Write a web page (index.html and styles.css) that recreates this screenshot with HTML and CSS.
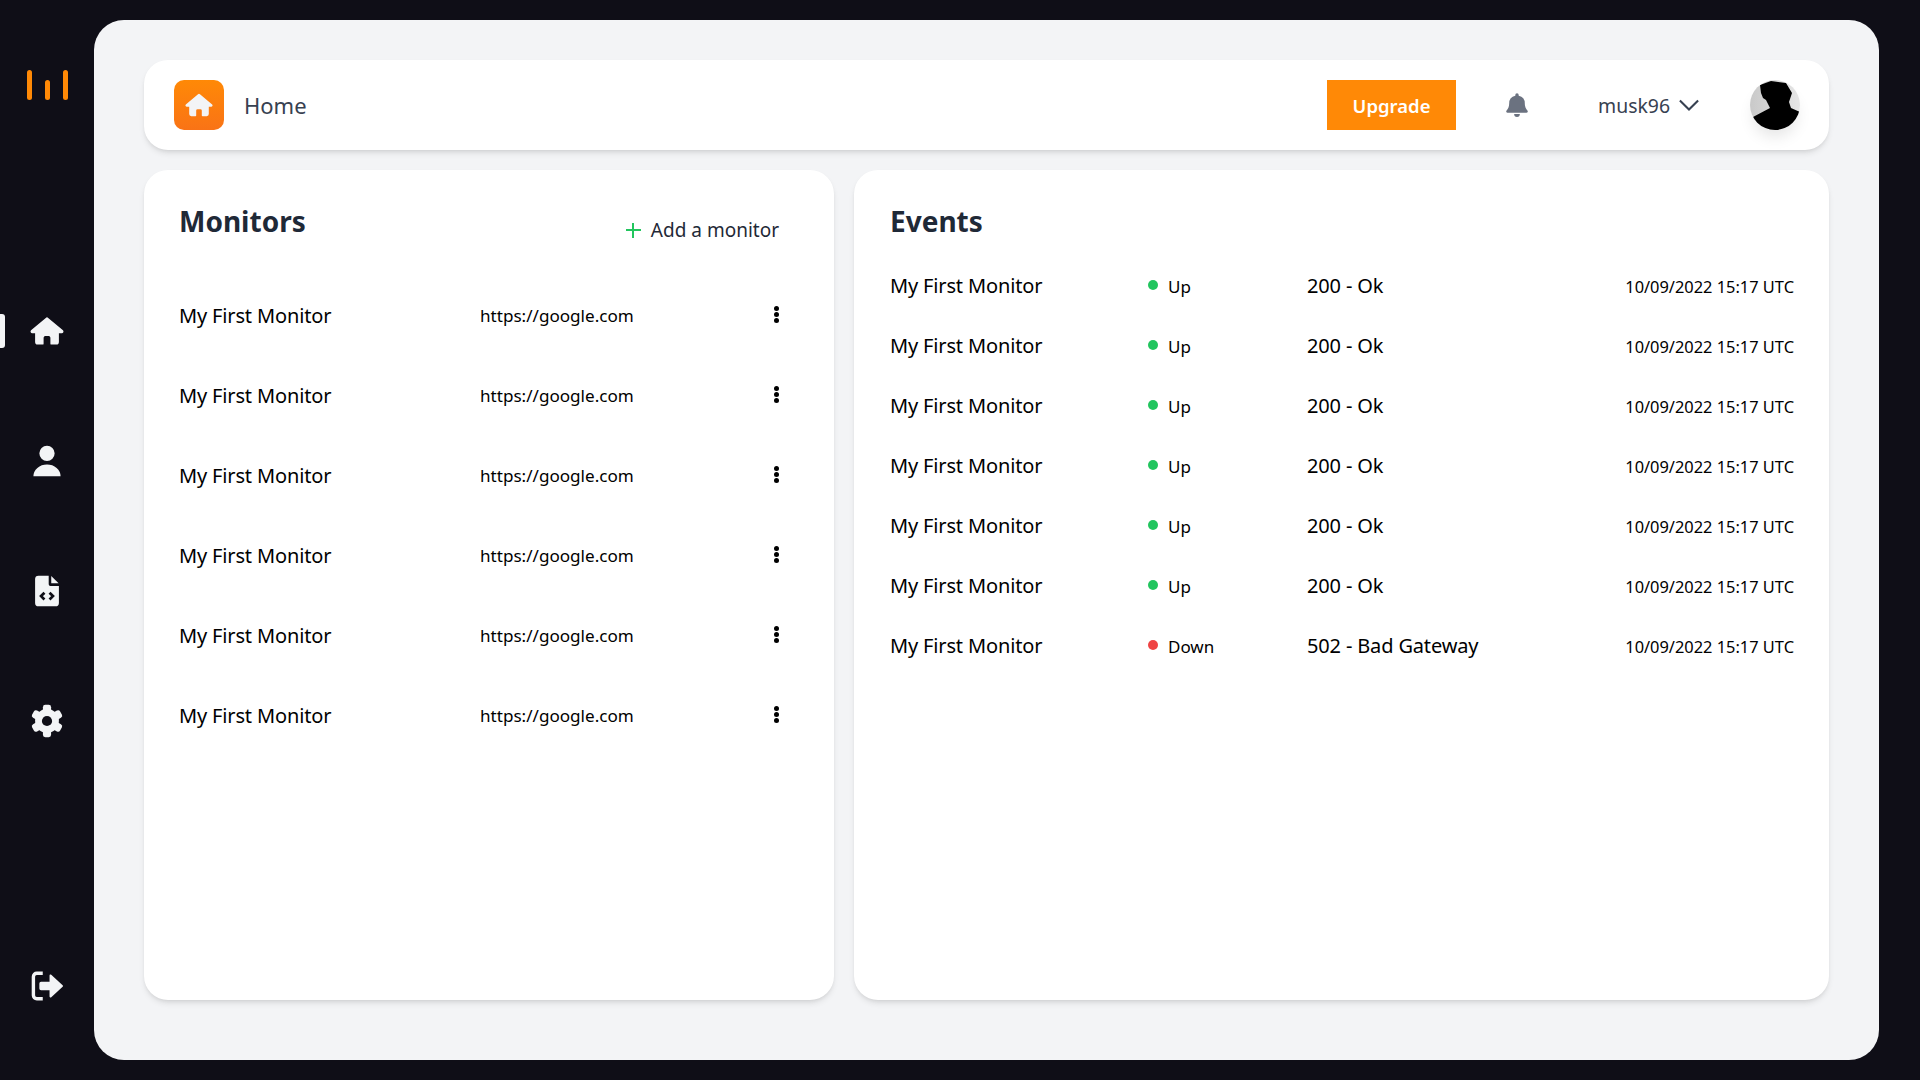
FILE: index.html
```html
<!DOCTYPE html>
<html lang="en">
<head>
    <meta charset="UTF-8">
    <title>Home</title>
    <link rel="stylesheet" href="styles.css">
</head>
<body>
<aside class="sidebar">
    <div class="logo"><span></span><span class="short"></span><span></span></div>
    <nav class="side-nav">
        <a class="side-link active" href="#">
            <svg class="side-icon" viewBox="0 0 20 20"><path d="M10.7 2.3a1 1 0 0 0-1.400 0L.6 9.600a1 1 0 0 0 .8 1.700H3v5.200A1.500 1.500 0 0 0 4.500 18H7.500a.5.5 0 0 0 .5-.5V14a1 1 0 0 1 1-1h2a1 1 0 0 1 1 1v3.500a.5.5 0 0 0 .5.5h3A1.500 1.500 0 0 0 17 16.500V11.300h1.600a1 1 0 0 0 .8-1.700z"/></svg>
        </a>
        <a class="side-link" href="#">
            <svg class="side-icon" viewBox="0 0 20 20"><path d="M10 10a4.500 4.500 0 1 0 0-9 4.500 4.500 0 0 0 0 9zM2 19a8 7 0 0 1 16 0z"/></svg>
        </a>
        <a class="side-link" href="#">
            <svg class="side-icon" viewBox="0 0 20 20"><path d="M5 1h6v5a1 1 0 0 0 1 1h5v10a2 2 0 0 1-2 2H5a2 2 0 0 1-2-2V3a2 2 0 0 1 2-2z"/><path d="M12.500 1.200 16.800 5.500h-4.300z"/><path class="code-mark" d="M8.500 11 6.500 13l2 2M11.500 11l2 2-2 2"/></svg>
        </a>
        <a class="side-link" href="#">
            <svg class="side-icon" viewBox="0 0 20 20">
                <circle cx="10" cy="10" r="7"/>
                <rect x="7.600" y="0.500" width="4.800" height="19" rx="1.400"/>
                <rect x="7.600" y="0.500" width="4.800" height="19" rx="1.400" transform="rotate(60 10 10)"/>
                <rect x="7.600" y="0.500" width="4.800" height="19" rx="1.400" transform="rotate(120 10 10)"/>
                <circle class="gear-hole" cx="10" cy="10" r="3"/>
            </svg>
        </a>
    </nav>
    <a class="side-link logout" href="#">
        <svg class="side-icon" viewBox="0 0 20 20"><path class="logout-bracket" d="M7.500 2.500H4A2 2 0 0 0 2 4.500v11a2 2 0 0 0 2 2h3.500"/><path d="M6.500 7.500h5V3.800a.6.6 0 0 1 1-.4l6.700 6.100a.7.7 0 0 1 0 1l-6.700 6.100a.6.600 0 0 1-1-.4v-3.700h-5a1 1 0 0 1-1-1v-3a1 1 0 0 1 1-1z"/></svg>
    </a>
</aside>

<main class="content">
    <header class="topbar">
        <div class="page-badge">
            <svg viewBox="0 0 20 20"><path d="M10.700 2.300a1 1 0 0 0-1.400 0L.6 9.600a1 1 0 0 0 .8 1.700H3v5.200A1.500 1.500 0 0 0 4.500 18H7.500a.5.5 0 0 0 .5-.5V14a1 1 0 0 1 1-1h2a1 1 0 0 1 1 1v3.500a.5.5 0 0 0 .5.5h3A1.500 1.500 0 0 0 17 16.500V11.300h1.600a1 1 0 0 0 .8-1.700z"/></svg>
        </div>
        <span class="page-title">Home</span>
        <button class="upgrade">Upgrade</button>
        <svg class="bell" viewBox="0 0 20 20"><path d="M10 1a1.300 1.300 0 0 0-1.300 1.300v.5A6 6 0 0 0 4 8.700c0 3-1 4.500-2 5.600a1 1 0 0 0 .7 1.700h14.600a1 1 0 0 0 .7-1.700c-1-1.100-2-2.600-2-5.600a6 6 0 0 0-4.700-5.900v-.5A1.300 1.300 0 0 0 10 1zM7.800 17a2.200 2.200 0 0 0 4.400 0z"/></svg>
        <span class="username">musk96</span>
        <svg class="chevron" viewBox="0 0 20 20"><path d="M3 6.500l7 7 7-7"/></svg>
        <div class="avatar">
            <svg viewBox="0 0 50 50">
                <defs><linearGradient id="avatarBg" x1="0" y1="0" x2="1" y2="0"><stop offset="0" stop-color="#c9c9c9"/><stop offset="1" stop-color="#e6e6e6"/></linearGradient></defs>
                <rect width="50" height="50" fill="url(#avatarBg)"/>
                <path d="M10 5 21 1 36 3 42 13 39 22 41 28 50 32 50 50 0 50 3 37 20 28 16 20 13 18 11 13z"/>
            </svg>
        </div>
    </header>

    <div class="panels">
        <section class="panel monitors">
            <div class="panel-head">
                <h2>Monitors</h2>
                <a class="add-link" href="#"><span class="plus"></span>Add a monitor</a>
            </div>
            <ul class="monitor-list" id="monitorList"></ul>
        </section>
        <section class="panel events">
            <h2>Events</h2>
            <div class="event-list" id="eventList"></div>
        </section>
    </div>
</main>

<script>
    const monitorList = document.getElementById('monitorList');
    for (let i = 0; i < 6; i++) {
        const li = document.createElement('li');
        li.className = 'monitor-row';
        li.innerHTML = `
            <span class="name">My First Monitor</span>
            <span class="url">https://google.com</span>
            <span class="dots"><i></i><i></i><i></i></span>
        `;
        monitorList.appendChild(li);
    }

    const events = [
        ['up', 'Up', '200 - Ok'],
        ['up', 'Up', '200 - Ok'],
        ['up', 'Up', '200 - Ok'],
        ['up', 'Up', '200 - Ok'],
        ['up', 'Up', '200 - Ok'],
        ['up', 'Up', '200 - Ok'],
        ['down', 'Down', '502 - Bad Gateway']
    ];
    const eventList = document.getElementById('eventList');
    events.forEach(ev => {
        const row = document.createElement('div');
        row.className = 'event-row';
        row.innerHTML = `
            <span class="name">My First Monitor</span>
            <span class="status ${ev[0]}">${ev[1]}</span>
            <span class="name">${ev[2]}</span>
            <span class="time">10/09/2022 15:17 UTC</span>
        `;
        eventList.appendChild(row);
    });
</script>
</body>
</html>
```

FILE: styles.css
```css
* {
    box-sizing: border-box;
}

body {
    margin: 0;
    height: 1080px;
    display: flex;
    padding: 20px 41px 20px 0;
    overflow: hidden;
    background-color: #0f0e17;
    font-family: "Noto Sans", "Open Sans", sans-serif;
    color: #000;
}

a {
    text-decoration: none;
    color: inherit;
}

/* sidebar */
.sidebar {
    width: 94px;
    flex: none;
    display: flex;
    flex-direction: column;
    align-items: center;
    padding: 50px 0 57px;
}

.logo {
    display: flex;
    gap: 13px;
    align-items: flex-end;
    height: 30px;
}

.logo span {
    width: 5px;
    height: 30px;
    border-radius: 3px;
    background-color: #ff8906;
}

.logo .short {
    height: 20px;
}

.side-nav {
    margin-top: 214px;
    display: flex;
    flex-direction: column;
    gap: 96px;
    align-self: stretch;
}

.side-link {
    position: relative;
    display: flex;
    justify-content: center;
    height: 34px;
}

.side-link.active::before {
    content: "";
    position: absolute;
    left: 0;
    top: 0;
    width: 5px;
    height: 34px;
    border-radius: 0 3px 3px 0;
    background-color: #f3f4f6;
}

.side-icon {
    width: 34px;
    height: 34px;
    fill: #f3f4f6;
}

.code-mark {
    fill: none;
    stroke: #0f0e17;
    stroke-width: 1.600;
}

.gear-hole {
    fill: #0f0e17;
}

.logout-bracket {
    fill: none;
    stroke: #f3f4f6;
    stroke-width: 2;
}

.logout {
    margin-top: auto;
}

/* main area */
.content {
    flex: 1;
    display: flex;
    flex-direction: column;
    gap: 20px;
    padding: 40px 50px 60px 50px;
    border-radius: 30px;
    background-color: #f3f4f6;
}

.topbar {
    display: flex;
    align-items: center;
    height: 90px;
    padding: 0 29px 0 30px;
    border-radius: 24px;
    background-color: #fff;
    box-shadow: 0 4px 6px -1px rgba(0, 0, 0, 0.1), 0 2px 4px -2px rgba(0, 0, 0, 0.1);
}

.page-badge {
    width: 50px;
    height: 50px;
    display: flex;
    align-items: center;
    justify-content: center;
    border-radius: 10px;
    background: linear-gradient(#ff8906, #f97316);
}

.page-badge svg {
    width: 28px;
    height: 28px;
    fill: #f3f4f6;
}

.page-title {
    margin-left: 20px;
    font-size: 22px;
    color: #374151;
}

.upgrade {
    margin-left: auto;
    width: 129px;
    height: 50px;
    border: none;
    background-color: #ff8906;
    color: #fffffe;
    font-family: inherit;
    font-size: 18.500px;
    font-weight: 600;
}

.bell {
    margin-left: 48px;
    width: 26px;
    height: 26px;
    fill: #6b7280;
}

.username {
    margin-left: 68px;
    font-size: 19.400px;
    color: #374151;
}

.chevron {
    margin-left: 6px;
    width: 26px;
    height: 26px;
    fill: none;
    stroke: #374151;
    stroke-width: 1.600;
}

.avatar {
    margin-left: 48px;
    width: 50px;
    height: 50px;
    border-radius: 50%;
    overflow: hidden;
    box-shadow: 0 10px 15px -3px rgba(0, 0, 0, 0.1);
}

.avatar svg {
    display: block;
}

.panels {
    flex: 1;
    display: flex;
    gap: 20px;
}

.panel {
    border-radius: 24px;
    background-color: #fff;
    box-shadow: 0 4px 6px -1px rgba(0, 0, 0, 0.1), 0 2px 4px -2px rgba(0, 0, 0, 0.1);
}

.monitors {
    width: 690px;
    padding: 29px 55px 0 35px;
}

.events {
    flex: 1;
    padding: 29px 35px 0 36px;
}

h2 {
    margin: 0;
    font-size: 28px;
    line-height: 44px;
    font-weight: 700;
    color: #1f2937;
}

.panel-head {
    display: flex;
    justify-content: space-between;
    align-items: flex-start;
}

.add-link {
    display: flex;
    align-items: center;
    gap: 10px;
    margin-top: 16px;
    font-size: 19px;
    line-height: 30px;
    color: #1f2937;
}

.plus {
    width: 15px;
    height: 15px;
    background:
        linear-gradient(#22c55e, #22c55e) center / 100% 2px no-repeat,
        linear-gradient(#22c55e, #22c55e) center / 2px 100% no-repeat;
}

.monitor-list {
    list-style: none;
    margin: 30px 0 0;
    padding: 0;
}

.monitor-row {
    display: flex;
    align-items: center;
    height: 80px;
}

.name {
    font-size: 20px;
    letter-spacing: -0.15px;
}

.monitor-row .name {
    width: 301px;
}

.url {
    font-size: 17.100px;
}

.dots {
    margin-left: auto;
    display: flex;
    flex-direction: column;
    gap: 1px;
    margin-top: -2px;
}

.dots i {
    width: 5px;
    height: 5px;
    border-radius: 50%;
    background-color: #000;
}

.event-list {
    margin-top: 13px;
}

.event-row {
    display: grid;
    grid-template-columns: 258px 159px 1fr auto;
    align-items: center;
    height: 60px;
}

.event-row .name {
    margin-top: -2px;
}

.status {
    display: flex;
    align-items: center;
    gap: 10px;
    font-size: 17px;
}

.status::before {
    content: "";
    width: 10px;
    height: 10px;
    margin-top: -3px;
    border-radius: 50%;
}

.status.up::before {
    background-color: #22c55e;
}

.status.down::before {
    background-color: #ef4444;
}

.time {
    font-size: 16.400px;
}
```
